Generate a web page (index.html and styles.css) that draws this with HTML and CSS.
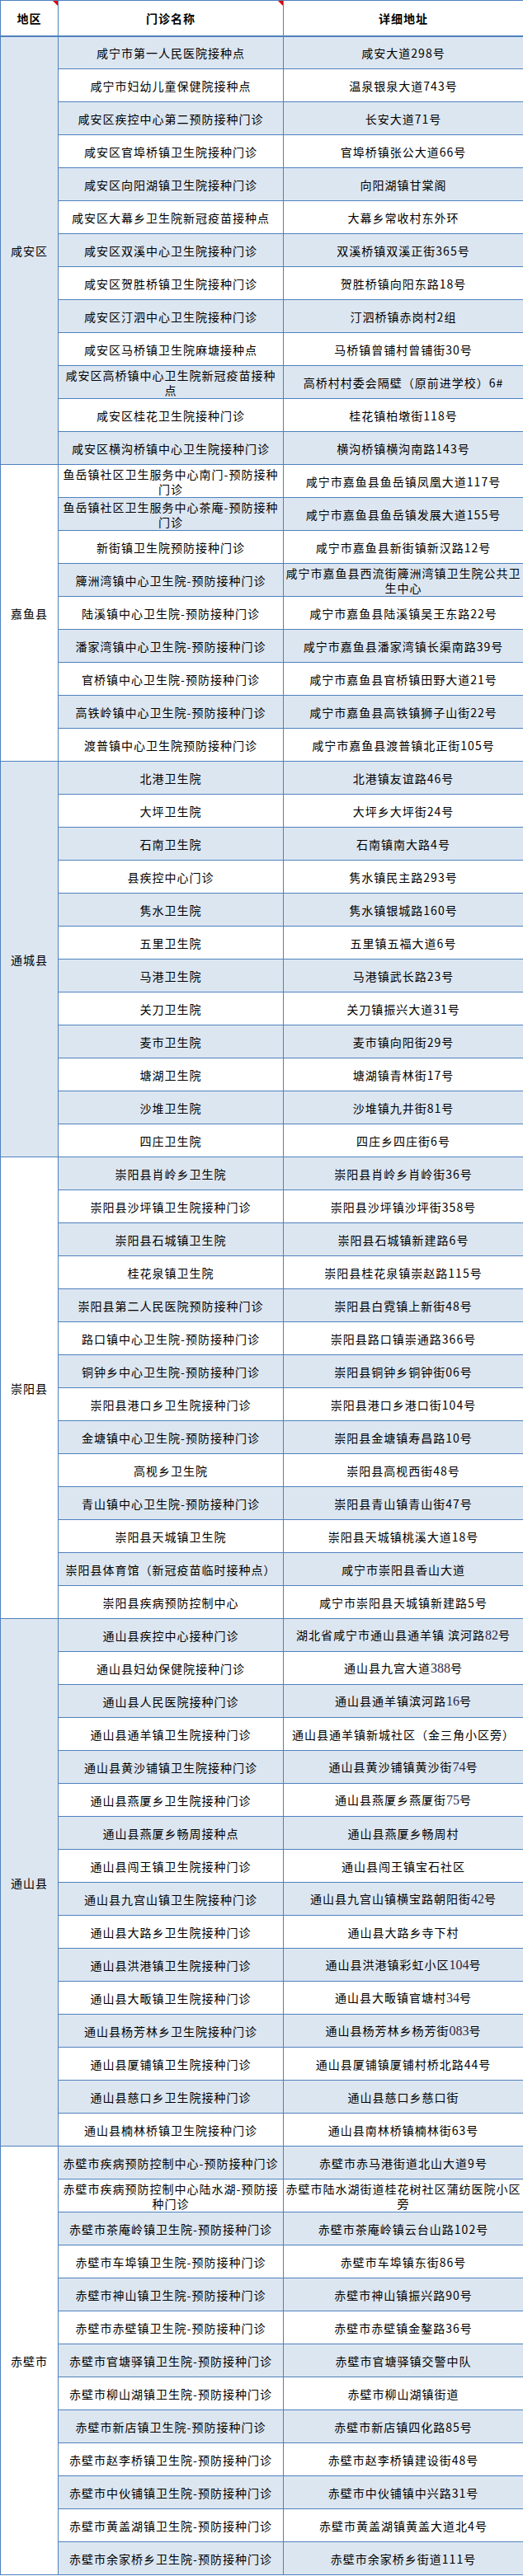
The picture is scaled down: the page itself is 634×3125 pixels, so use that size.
FILE: index.html
```html
<!DOCTYPE html>
<html lang="zh-CN">
<head>
<meta charset="utf-8">
<title>咸宁市预防接种门诊</title>
<link rel="stylesheet" href="styles.css">
</head>
<body>
<table class="sheet">
<colgroup><col class="c-area"><col class="c-name"><col class="c-addr"></colgroup>
<thead>
<tr class="head"><th class="mark">地区</th><th class="mark">门诊名称</th><th>详细地址</th></tr>
</thead>
<tbody>
<tr class="b"><td class="area b" rowspan="13">咸安区</td><td>咸宁市第一人民医院接种点</td><td>咸安大道298号</td></tr>
<tr><td>咸宁市妇幼儿童保健院接种点</td><td>温泉银泉大道743号</td></tr>
<tr class="b"><td>咸安区疾控中心第二预防接种门诊</td><td>长安大道71号</td></tr>
<tr><td>咸安区官埠桥镇卫生院接种门诊</td><td>官埠桥镇张公大道66号</td></tr>
<tr class="b"><td>咸安区向阳湖镇卫生院接种门诊</td><td>向阳湖镇甘棠阁</td></tr>
<tr><td>咸安区大幕乡卫生院新冠疫苗接种点</td><td>大幕乡常收村东外环</td></tr>
<tr class="b"><td>咸安区双溪中心卫生院接种门诊</td><td>双溪桥镇双溪正街365号</td></tr>
<tr><td>咸安区贺胜桥镇卫生院接种门诊</td><td>贺胜桥镇向阳东路18号</td></tr>
<tr class="b"><td>咸安区汀泗中心卫生院接种门诊</td><td>汀泗桥镇赤岗村2组</td></tr>
<tr><td>咸安区马桥镇卫生院麻塘接种点</td><td>马桥镇曾铺村曾铺街30号</td></tr>
<tr class="b"><td>咸安区高桥镇中心卫生院新冠疫苗接种点</td><td>高桥村村委会隔壁（原前进学校）6#</td></tr>
<tr><td>咸安区桂花卫生院接种门诊</td><td>桂花镇柏墩街118号</td></tr>
<tr class="b"><td>咸安区横沟桥镇中心卫生院接种门诊</td><td>横沟桥镇横沟南路143号</td></tr>

<tr><td class="area" rowspan="9">嘉鱼县</td><td>鱼岳镇社区卫生服务中心南门-预防接种门诊</td><td>咸宁市嘉鱼县鱼岳镇凤凰大道117号</td></tr>
<tr class="b"><td>鱼岳镇社区卫生服务中心茶庵-预防接种门诊</td><td>咸宁市嘉鱼县鱼岳镇发展大道155号</td></tr>
<tr><td>新街镇卫生院预防接种门诊</td><td>咸宁市嘉鱼县新街镇新汉路12号</td></tr>
<tr class="b"><td>簰洲湾镇中心卫生院-预防接种门诊</td><td>咸宁市嘉鱼县西流街簰洲湾镇卫生院公共卫生中心</td></tr>
<tr><td>陆溪镇中心卫生院-预防接种门诊</td><td>咸宁市嘉鱼县陆溪镇吴王东路22号</td></tr>
<tr class="b"><td>潘家湾镇中心卫生院-预防接种门诊</td><td>咸宁市嘉鱼县潘家湾镇长渠南路39号</td></tr>
<tr><td>官桥镇中心卫生院-预防接种门诊</td><td>咸宁市嘉鱼县官桥镇田野大道21号</td></tr>
<tr class="b"><td>高铁岭镇中心卫生院-预防接种门诊</td><td>咸宁市嘉鱼县高铁镇狮子山街22号</td></tr>
<tr><td>渡普镇中心卫生院预防接种门诊</td><td>咸宁市嘉鱼县渡普镇北正街105号</td></tr>

<tr class="b"><td class="area b" rowspan="12">通城县</td><td>北港卫生院</td><td>北港镇友谊路46号</td></tr>
<tr><td>大坪卫生院</td><td>大坪乡大坪街24号</td></tr>
<tr class="b"><td>石南卫生院</td><td>石南镇南大路4号</td></tr>
<tr><td>县疾控中心门诊</td><td>隽水镇民主路293号</td></tr>
<tr class="b"><td>隽水卫生院</td><td>隽水镇银城路160号</td></tr>
<tr><td>五里卫生院</td><td>五里镇五福大道6号</td></tr>
<tr class="b"><td>马港卫生院</td><td>马港镇武长路23号</td></tr>
<tr><td>关刀卫生院</td><td>关刀镇振兴大道31号</td></tr>
<tr class="b"><td>麦市卫生院</td><td>麦市镇向阳街29号</td></tr>
<tr><td>塘湖卫生院</td><td>塘湖镇青林街17号</td></tr>
<tr class="b"><td>沙堆卫生院</td><td>沙堆镇九井街81号</td></tr>
<tr><td>四庄卫生院</td><td>四庄乡四庄街6号</td></tr>

<tr class="b"><td class="area" rowspan="14">崇阳县</td><td>崇阳县肖岭乡卫生院</td><td>崇阳县肖岭乡肖岭街36号</td></tr>
<tr><td>崇阳县沙坪镇卫生院接种门诊</td><td>崇阳县沙坪镇沙坪街358号</td></tr>
<tr class="b"><td>崇阳县石城镇卫生院</td><td>崇阳县石城镇新建路6号</td></tr>
<tr><td>桂花泉镇卫生院</td><td>崇阳县桂花泉镇崇赵路115号</td></tr>
<tr class="b"><td>崇阳县第二人民医院预防接种门诊</td><td>崇阳县白霓镇上新街48号</td></tr>
<tr><td>路口镇中心卫生院-预防接种门诊</td><td>崇阳县路口镇崇通路366号</td></tr>
<tr class="b"><td>铜钟乡中心卫生院-预防接种门诊</td><td>崇阳县铜钟乡铜钟街06号</td></tr>
<tr><td>崇阳县港口乡卫生院接种门诊</td><td>崇阳县港口乡港口街104号</td></tr>
<tr class="b"><td>金塘镇中心卫生院-预防接种门诊</td><td>崇阳县金塘镇寿昌路10号</td></tr>
<tr><td>高枧乡卫生院</td><td>崇阳县高枧西街48号</td></tr>
<tr class="b"><td>青山镇中心卫生院-预防接种门诊</td><td>崇阳县青山镇青山街47号</td></tr>
<tr><td>崇阳县天城镇卫生院</td><td>崇阳县天城镇桃溪大道18号</td></tr>
<tr class="b"><td>崇阳县体育馆（新冠疫苗临时接种点）</td><td>咸宁市崇阳县香山大道</td></tr>
<tr><td>崇阳县疾病预防控制中心</td><td>咸宁市崇阳县天城镇新建路5号</td></tr>

<tr class="b"><td class="area b" rowspan="16">通山县</td><td>通山县疾控中心接种门诊</td><td>湖北省咸宁市通山县通羊镇 滨河路<span class="num">82</span>号</td></tr>
<tr><td>通山县妇幼保健院接种门诊</td><td>通山县九宫大道<span class="num">388</span>号</td></tr>
<tr class="b"><td>通山县人民医院接种门诊</td><td>通山县通羊镇滨河路<span class="num">16</span>号</td></tr>
<tr><td>通山县通羊镇卫生院接种门诊</td><td>通山县通羊镇新城社区（金三角小区旁）</td></tr>
<tr class="b"><td>通山县黄沙铺镇卫生院接种门诊</td><td>通山县黄沙铺镇黄沙街<span class="num">74</span>号</td></tr>
<tr><td>通山县燕厦乡卫生院接种门诊</td><td>通山县燕厦乡燕厦街<span class="num">75</span>号</td></tr>
<tr class="b"><td>通山县燕厦乡畅周接种点</td><td>通山县燕厦乡畅周村</td></tr>
<tr><td>通山县闯王镇卫生院接种门诊</td><td>通山县闯王镇宝石社区</td></tr>
<tr class="b"><td>通山县九宫山镇卫生院接种门诊</td><td>通山县九宫山镇横宝路朝阳街<span class="num">42</span>号</td></tr>
<tr><td>通山县大路乡卫生院接种门诊</td><td>通山县大路乡寺下村</td></tr>
<tr class="b"><td>通山县洪港镇卫生院接种门诊</td><td>通山县洪港镇彩虹小区<span class="num">104</span>号</td></tr>
<tr><td>通山县大畈镇卫生院接种门诊</td><td>通山县大畈镇官塘村<span class="num">34</span>号</td></tr>
<tr class="b"><td>通山县杨芳林乡卫生院接种门诊</td><td>通山县杨芳林乡杨芳街<span class="num">083</span>号</td></tr>
<tr><td>通山县厦铺镇卫生院接种门诊</td><td>通山县厦铺镇厦铺村桥北路44号</td></tr>
<tr class="b"><td>通山县慈口乡卫生院接种门诊</td><td>通山县慈口乡慈口街</td></tr>
<tr><td>通山县楠林桥镇卫生院接种门诊</td><td>通山县南林桥镇楠林街63号</td></tr>

<tr class="b"><td class="area" rowspan="13">赤壁市</td><td>赤壁市疾病预防控制中心-预防接种门诊</td><td>赤壁市赤马港街道北山大道9号</td></tr>
<tr><td>赤壁市疾病预防控制中心陆水湖-预防接种门诊</td><td>赤壁市陆水湖街道桂花树社区蒲纺医院小区旁</td></tr>
<tr class="b"><td>赤壁市茶庵岭镇卫生院-预防接种门诊</td><td>赤壁市茶庵岭镇云台山路102号</td></tr>
<tr><td>赤壁市车埠镇卫生院-预防接种门诊</td><td>赤壁市车埠镇东街86号</td></tr>
<tr class="b"><td>赤壁市神山镇卫生院-预防接种门诊</td><td>赤壁市神山镇振兴路90号</td></tr>
<tr><td>赤壁市赤壁镇卫生院-预防接种门诊</td><td>赤壁市赤壁镇金鏊路36号</td></tr>
<tr class="b"><td>赤壁市官塘驿镇卫生院-预防接种门诊</td><td>赤壁市官塘驿镇交警中队</td></tr>
<tr><td>赤壁市柳山湖镇卫生院-预防接种门诊</td><td>赤壁市柳山湖镇街道</td></tr>
<tr class="b"><td>赤壁市新店镇卫生院-预防接种门诊</td><td>赤壁市新店镇四化路85号</td></tr>
<tr><td>赤壁市赵李桥镇卫生院-预防接种门诊</td><td>赤壁市赵李桥镇建设街48号</td></tr>
<tr class="b"><td>赤壁市中伙铺镇卫生院-预防接种门诊</td><td>赤壁市中伙铺镇中兴路31号</td></tr>
<tr><td>赤壁市黄盖湖镇卫生院-预防接种门诊</td><td>赤壁市黄盖湖镇黄盖大道北4号</td></tr>
<tr class="b"><td>赤壁市余家桥乡卫生院-预防接种门诊</td><td>赤壁市余家桥乡街道111号</td></tr>
</tbody>
</table>
</body>
</html>
```

FILE: styles.css
```css
html, body {
  margin: 0;
  padding: 0;
  background: #ffffff;
}

.sheet {
  width: 634px;
  table-layout: fixed;
  border-collapse: collapse;
  font-family: "Noto Sans CJK SC", "Noto Sans", sans-serif;
  font-size: 14px;
  letter-spacing: 1px;
  color: #000000;
}

.c-area { width: 70px; }
.c-name { width: 273px; }
.c-addr { width: 291px; }

.sheet th,
.sheet td {
  border: 1px solid #4f81bd;
  padding: 0 2px;
  text-align: center;
  vertical-align: middle;
  line-height: 18px;
  word-break: break-all;
}

.head {
  height: 43px;
}

.sheet th {
  font-weight: 700;
  background: #ffffff;
  border-bottom-width: 2px;
}

.mark {
  position: relative;
}

.mark::after {
  content: "";
  position: absolute;
  top: 0;
  right: 0;
  width: 0;
  height: 0;
  border-top: 6px solid #e00000;
  border-left: 6px solid transparent;
}

.sheet tbody tr {
  height: 40px;
}

.sheet tbody tr.b td {
  background: #dce6f1;
}

.sheet tbody tr td.area {
  background: #ffffff;
}

.sheet tbody tr td.area.b {
  background: #dce6f1;
}

.num {
  font-family: "Liberation Serif", serif;
  font-size: 16px;
  letter-spacing: 0;
  color: #2a2a48;
}
```
